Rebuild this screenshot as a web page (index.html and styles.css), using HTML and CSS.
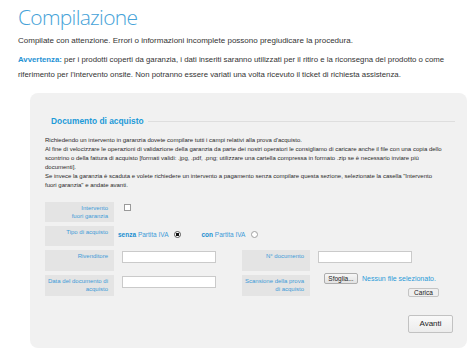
FILE: index.html
```html
<!DOCTYPE html>
<html lang="it">
<head>
    <meta charset="UTF-8">
    <meta name="viewport" content="width=device-width, initial-scale=1.0">
    <title>Compilazione</title>
    <link rel="stylesheet" href="styles.css">
</head>
<body>
    <div class="page">
        <h1 class="page-title">Compilazione</h1>
        <p class="intro">Compilate con attenzione. Errori o informazioni incomplete possono pregiudicare la procedura.</p>
        <p class="warning"><b>Avvertenza:</b> per i prodotti coperti da garanzia, i dati inseriti saranno utilizzati per il ritiro e la riconsegna del prodotto o come riferimento per l'intervento onsite. Non potranno essere variati una volta ricevuto il ticket di richiesta assistenza.</p>

        <div class="panel">
            <div class="panel-header">
                <span class="panel-title">Documento di acquisto</span>
                <span class="panel-rule"></span>
            </div>

            <p class="panel-text">
                Richiedendo un intervento in garanzia dovete compilare tutti i campi relativi alla prova d'acquisto.<br>
                Al fine di velocizzare le operazioni di validazione della garanzia da parte dei nostri operatori le consigliamo di caricare anche il file con una copia dello<br>
                scontrino o della fattura di acquisto [formati validi: .jpg, .pdf, .png; utilizzare una cartella compressa in formato .zip se è necessario inviare più<br>
                documenti].<br>
                Se invece la garanzia è scaduta e volete richiedere un intervento a pagamento senza compilare questa sezione, selezionate la casella "Intervento<br>
                fuori garanzia" e andate avanti.
            </p>

            <div class="form-grid">
                <div class="field-label">Intervento<br>fuori garanzia</div>
                <div class="field-value wide"><span class="checkbox"></span></div>

                <div class="field-label">Tipo di acquisto</div>
                <div class="field-value wide">
                    <span class="choice"><b>senza</b> Partita IVA</span>
                    <span class="radio checked"></span>
                    <span class="choice second"><b>con</b> Partita IVA</span>
                    <span class="radio"></span>
                </div>

                <div class="field-label">Rivenditore</div>
                <div class="field-value"><span class="text-input"></span></div>
                <div class="field-label">N° documento</div>
                <div class="field-value"><span class="text-input"></span></div>

                <div class="field-label">Data del documento di acquisto</div>
                <div class="field-value"><span class="text-input"></span></div>
                <div class="field-label">Scansione della prova di acquisto</div>
                <div class="field-value upload">
                    <div class="file-line">
                        <button class="btn btn-file">Sfoglia...</button>
                        <span class="file-name">Nessun file selezionato.</span>
                    </div>
                    <button class="btn btn-upload">Carica</button>
                </div>
            </div>

            <div class="actions">
                <button class="btn btn-next">Avanti</button>
            </div>
        </div>
    </div>
</body>
</html>
```

FILE: styles.css
```css
* {
    margin: 0;
    padding: 0;
    box-sizing: border-box;
}

body {
    font-family: "Liberation Sans", Arial, sans-serif;
    background-color: #fff;
    color: #333;
    width: 474px;
    height: 352px;
    overflow: hidden;
}

.page {
    padding: 0 0 0 18px;
}

.page-title {
    font-family: "Open Sans", sans-serif;
    font-weight: 300;
    font-size: 21px;
    letter-spacing: -0.7px;
    line-height: 30px;
    color: #45a2d8;
    margin-top: 2px;
}

.intro {
    font-size: 8px;
    line-height: 15px;
    margin-top: 1px;
}

.warning {
    font-size: 7.8px;
    line-height: 15px;
    margin-top: 4px;
    padding-right: 16px;
}

.warning b {
    color: #1f92d4;
}

.panel {
    margin: 11px 0 0 12px;
    width: 437px;
    height: 255px;
    background-color: #f1f1f1;
    border-radius: 8px;
    padding: 22px 12px 0 15px;
}

.panel-header {
    display: flex;
    align-items: center;
    padding-left: 6px;
    height: 12px;
}

.panel-title {
    font-weight: bold;
    font-size: 8.4px;
    color: #1c9ad8;
}

.panel-rule {
    flex: 1;
    margin-left: 4px;
    border-top: 1px solid #dedede;
}

.panel-text {
    font-size: 6px;
    line-height: 9px;
    margin-top: 9px;
    color: #2a2a2a;
}

.form-grid {
    display: grid;
    grid-template-columns: 69px 128px 68px 1fr;
    grid-template-rows: 20px 20px 21px 21px;
    row-gap: 4px;
    margin-top: 12px;
}

.field-label {
    background-color: #e4e4e4;
    color: #3d9bd8;
    font-size: 6px;
    line-height: 8px;
    text-align: right;
    padding: 2px 6px 0 2px;
}

.field-value {
    display: flex;
    align-items: center;
    padding-left: 8px;
    font-size: 6.5px;
}

.field-value.wide {
    grid-column: 2 / 5;
    align-items: flex-start;
    padding-top: 2px;
}

.checkbox {
    width: 7px;
    height: 7px;
    margin-left: 2px;
    background-color: #fff;
    border: 1px solid #9a9a9a;
}

.choice {
    color: #3d9bd8;
    margin: 3px 0 0 -4px;
}

.choice b {
    color: #1c8fd0;
}

.choice.second {
    margin-left: 20px;
}

.radio {
    width: 7px;
    height: 7px;
    margin: 3px 0 0 6px;
    border-radius: 50%;
    background-color: #fff;
    border: 1px solid #a0a0a0;
}

.radio.checked {
    background: radial-gradient(circle, #111 0, #111 1.6px, #fff 2px);
    border-color: #555;
}

.text-input {
    width: 94px;
    height: 12px;
    margin-top: -7px;
    background-color: #fff;
    border: 1px solid #cacaca;
}

.upload {
    flex-direction: column;
    align-items: flex-start;
    padding-left: 14px;
}

.file-line {
    display: flex;
    align-items: center;
    margin-top: -2px;
}

.btn {
    font-family: "Liberation Sans", Arial, sans-serif;
    color: #222;
    background: linear-gradient(#f6f6f6, #e2e2e2);
    border: 1px solid #adadad;
    border-radius: 2px;
}

.btn-file {
    width: 34px;
    height: 11px;
    font-size: 6.5px;
    line-height: 9px;
}

.file-name {
    color: #2b9ad8;
    font-size: 7px;
    margin-left: 4px;
}

.btn-upload {
    width: 31px;
    height: 12px;
    font-size: 6.5px;
    margin: 4px 0 0 84px;
    background: #efefef;
    border-color: #c4c4c4;
}

.actions {
    padding: 16px 0 0 363px;
}

.btn-next {
    width: 45px;
    height: 18px;
    font-size: 8px;
    background: linear-gradient(#f9f9f9, #ececec);
    border-color: #c2c2c2;
}
```
